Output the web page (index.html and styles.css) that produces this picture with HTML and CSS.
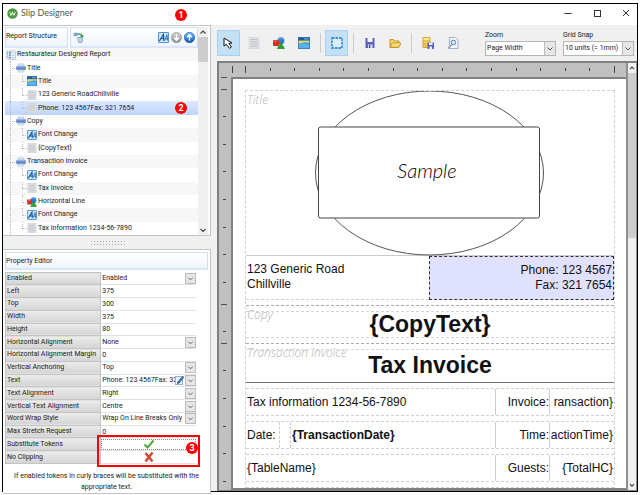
FILE: index.html
```
<!DOCTYPE html>
<html lang="en">
<head>
  <meta charset="UTF-8">
  <meta name="viewport" content="width=device-width, initial-scale=1.0">
  <title>Slip Designer</title>
  <link rel="stylesheet" href="styles.css">
</head>
<body>

  <!-- Shared icons -->
  <svg class="sprite" aria-hidden="true">
    <defs>
      <linearGradient id="blueGrad" x1="0" y1="0" x2="0" y2="1"><stop offset="0" stop-color="#7fc4f5"/><stop offset="1" stop-color="#0b55b5"/></linearGradient>
      <linearGradient id="greyGrad" x1="0" y1="0" x2="0" y2="1"><stop offset="0" stop-color="#d8d8d8"/><stop offset="1" stop-color="#8c8c8c"/></linearGradient>
      <linearGradient id="goldGrad" x1="0" y1="0" x2="0" y2="1"><stop offset="0" stop-color="#fdf0a8"/><stop offset="1" stop-color="#ecc040"/></linearGradient>
    </defs>
    <symbol id="icon-report" viewBox="0 0 16 16">
      <path d="M2 2.500 12 .8 15 2v13H4z" fill="#eef3fa" stroke="#9db4cf"/>
      <path d="M1 2v12M2.500 2v12" stroke="#8aa4c4" stroke-dasharray="1.500 1"/>
      <rect x="5" y="3" width="3" height="3" fill="#63a565"/><rect x="5" y="7" width="3" height="3" fill="#7092c8"/><rect x="5" y="11" width="3" height="2.500" fill="#7092c8"/>
      <path d="M9.500 4.500h4M9.500 8.500h4M9.500 12h4" stroke="#a9b8cc"/>
    </symbol>
    <symbol id="icon-band" viewBox="0 0 16 16">
      <rect x="3.500" y="1.500" width="9" height="4" fill="#dfeaf8" stroke="#a9bfe2"/>
      <path d="M3.500 10.500h9v4h-9z" fill="#e6effa" stroke="#a9bfe2"/>
      <rect x="0" y="4.500" width="16" height="7" rx="2.500" fill="#7a9cd6"/>
      <path d="M1.500 8h13" stroke="#4f70ac" stroke-width="1.500"/>
      <path d="M2 6h12" stroke="#b4cbef"/>
    </symbol>
    <symbol id="icon-text" viewBox="0 0 16 16">
      <rect x="1.500" y=".5" width="13" height="15" fill="#e3e5e8" stroke="#ccd0d5"/>
      <path d="M3 3.500h10M3 6.500h10M3 9.500h10M3 12.500h10" stroke="#b4b8be" stroke-width="1.200"/>
    </symbol>
    <symbol id="icon-image" viewBox="0 0 16 16">
      <rect x=".5" y=".5" width="15" height="15" fill="#3f93e2" stroke="#245f9f"/>
      <rect x="1" y="1" width="14" height="3.500" fill="#1d5c94"/>
      <path d="M1 5h14v2.500L9 7 1 9z" fill="#f3dd55"/>
      <path d="M8 2.500h6" stroke="#7db4e4" stroke-width="1.500"/>
      <path d="M1 10q6-3 14 0v5H1z" fill="#58b3f3"/>
    </symbol>
    <symbol id="icon-font" viewBox="0 0 16 16">
      <rect x=".75" y=".75" width="14.500" height="14.500" rx="1" fill="#cfe6fa" stroke="#4c96d8" stroke-width="1.500"/>
      <path d="M2 13 8 3.500 8.500 13M4.500 9.500H8.500" fill="none" stroke="#174f96" stroke-width="1.700"/>
      <path d="M9.500 12.500 13 4l1 8.500M10.500 10H14" fill="none" stroke="#2671bd" stroke-width="1.400"/>
    </symbol>
    <symbol id="icon-shapes" viewBox="0 0 16 16">
      <circle cx="10.500" cy="5" r="4.700" fill="#2d7bd0"/>
      <path d="M7 3q3-3 6 0" fill="none" stroke="#8bc0f2"/>
      <rect x="0" y="4" width="8" height="8" rx="1" fill="#d62f1f"/>
      <path d="M1.500 5.500h4" stroke="#f58d78"/>
      <path d="M10.500 7 15.500 15.500h-10z" fill="#26a332" stroke="#14771f" stroke-width=".6"/>
    </symbol>
    <symbol id="icon-chevron" viewBox="0 0 10 10">
      <path d="M2.500 4 5 6.500 7.500 4" fill="none" stroke="#555"/>
    </symbol>
  </svg>

  <div class="window">
    <header class="title-bar">
      <svg class="logo" viewBox="0 0 12 12"><circle cx="6" cy="6" r="5.700" fill="#4d9a45"/><path d="M3 4.200 4.300 8 6 4.800 7.700 8 9 4.200" fill="none" stroke="#d9efd4" stroke-width="1.100"/></svg>
      <h1>Slip Designer</h1>
      <div class="window-buttons">
        <button aria-label="Minimize"><svg viewBox="0 0 8 8"><path d="M.5 4.500h7" stroke="#333"/></svg></button>
        <button aria-label="Maximize"><svg viewBox="0 0 8 8"><rect x="1.500" y="1.500" width="6" height="6" fill="none" stroke="#333"/></svg></button>
        <button aria-label="Close"><svg viewBox="0 0 8 8"><path d="M1 1l6 6M7 1 1 7" stroke="#333"/></svg></button>
      </div>
      <span class="marker marker-one">1</span>
    </header>

    <div class="workspace">
      <aside class="sidebar">
        <section class="structure">
          <div class="structure-main">
            <div class="structure-head">
              <h2 class="panel-title">Report Structure</h2>
              <div class="structure-tools">
                <button aria-label="Refresh structure"><svg viewBox="0 0 16 16"><rect x="1" y="1" width="6" height="5" fill="#7aa2d8"/><path d="M7 3q6-1 6 4l-2-1M13 7l2-2" fill="none" stroke="#2f9a3a" stroke-width="2"/><path d="M7 8h7l-1 7H8z" fill="#bcd7ef" stroke="#608fbc"/></svg></button>
                <span class="spacer"></span>
                <button aria-label="Font change"><svg><use href="#icon-font"/></svg></button>
                <button aria-label="Move down"><svg viewBox="0 0 16 16"><circle cx="8" cy="8" r="7.500" fill="url(#greyGrad)" stroke="#999"/><path d="M8 3.500v8M4.500 8.500 8 12l3.500-3.500" fill="none" stroke="#fff" stroke-width="2"/></svg></button>
                <button aria-label="Move up"><svg viewBox="0 0 16 16"><circle cx="8" cy="8" r="7.500" fill="url(#blueGrad)" stroke="#1b5fae"/><path d="M8 12.500v-8M4.500 7.500 8 4l3.500 3.500" fill="none" stroke="#fff" stroke-width="2"/></svg></button>
              </div>
            </div>
            <ul class="tree">
              <li class="root"><svg><use href="#icon-report"/></svg>Restaurateur Designed Report</li>
              <li class="band"><svg><use href="#icon-band"/></svg>Title</li>
              <li class="item"><svg><use href="#icon-image"/></svg>Title</li>
              <li class="item"><svg><use href="#icon-text"/></svg>123 Generic RoadChillville</li>
              <li class="item selected"><svg><use href="#icon-text"/></svg>Phone: 123 4567Fax: 321 7654<span class="marker marker-two">2</span></li>
              <li class="band"><svg><use href="#icon-band"/></svg>Copy</li>
              <li class="item"><svg><use href="#icon-font"/></svg>Font Change</li>
              <li class="item"><svg><use href="#icon-text"/></svg>{CopyText}</li>
              <li class="band"><svg><use href="#icon-band"/></svg>Transaction invoice</li>
              <li class="item"><svg><use href="#icon-font"/></svg>Font Change</li>
              <li class="item"><svg><use href="#icon-text"/></svg>Tax Invoice</li>
              <li class="item"><svg><use href="#icon-shapes"/></svg>Horizontal Line</li>
              <li class="item"><svg><use href="#icon-font"/></svg>Font Change</li>
              <li class="item"><svg><use href="#icon-text"/></svg>Tax information 1234-56-7890</li>
            </ul>
          </div>
          <div class="scrollbar">
            <svg viewBox="0 0 10 10"><path d="M2.500 6.500 5 4l2.500 2.500" fill="none" stroke="#444" stroke-width="1.200"/></svg>
            <span class="thumb"></span>
            <svg viewBox="0 0 10 10"><path d="M2.500 4 5 6.500 7.500 4" fill="none" stroke="#444" stroke-width="1.200"/></svg>
          </div>
        </section>

        <div class="splitter"><span></span></div>

        <section class="properties">
          <h2 class="panel-title">Property Editor</h2>
          <div class="property-grid">
            <table>
              <tbody>
                <tr><th><label for="enabled">Enabled</label></th><td><div class="cell"><select id="enabled"><option>Enabled</option></select><svg class="drop"><use href="#icon-chevron"/></svg></div></td></tr>
                <tr><th><label for="left">Left</label></th><td><input id="left" value="375"></td></tr>
                <tr><th><label for="top">Top</label></th><td><input id="top" value="300"></td></tr>
                <tr><th><label for="width">Width</label></th><td><input id="width" value="375"></td></tr>
                <tr><th><label for="height">Height</label></th><td><input id="height" value="80"></td></tr>
                <tr><th><label for="halign">Horizontal Alignment</label></th><td><div class="cell"><select id="halign"><option>None</option></select><svg class="drop"><use href="#icon-chevron"/></svg></div></td></tr>
                <tr><th><label for="hmargin">Horizontal Alignment Margin</label></th><td><input id="hmargin" value="0"></td></tr>
                <tr><th><label for="anchor">Vertical Anchoring</label></th><td><div class="cell"><select id="anchor"><option>Top</option></select><svg class="drop"><use href="#icon-chevron"/></svg></div></td></tr>
                <tr><th><label for="text">Text</label></th><td><div class="cell"><input id="text" value="Phone: 123 4567Fax: 321 7654"><button class="edit" aria-label="Edit text"><svg viewBox="0 0 10 10"><rect x=".5" y="1.500" width="7" height="8" fill="#eaf1fa" stroke="#9ab0cc"/><path d="M3 8 8.500 1.500" stroke="#2f6db5" stroke-width="2.200"/><path d="m2 9 .5-2L4 8z" fill="#333"/></svg></button><svg class="drop"><use href="#icon-chevron"/></svg></div></td></tr>
                <tr><th><label for="talign">Text Alignment</label></th><td><div class="cell"><select id="talign"><option>Right</option></select><svg class="drop"><use href="#icon-chevron"/></svg></div></td></tr>
                <tr><th><label for="valign">Vertical Text Alignment</label></th><td><div class="cell"><select id="valign"><option>Centre</option></select><svg class="drop"><use href="#icon-chevron"/></svg></div></td></tr>
                <tr><th><label for="wrap">Word Wrap Style</label></th><td><div class="cell"><select id="wrap"><option>Wrap On Line Breaks Only</option></select><svg class="drop"><use href="#icon-chevron"/></svg></div></td></tr>
                <tr><th><label for="stretch">Max Stretch Request</label></th><td><input id="stretch" value="0"></td></tr>
                <tr><th><label for="tokens">Substitute Tokens</label></th><td><button id="tokens" class="toggle focused" aria-pressed="true"><svg viewBox="0 0 12 10"><path d="M1.500 5.500 4.500 8.500 10.500 1.500" fill="none" stroke="#4fa83f" stroke-width="2"/></svg></button></td></tr>
                <tr><th><label for="clipping">No Clipping</label></th><td><button id="clipping" class="toggle" aria-pressed="false"><svg viewBox="0 0 12 10"><path d="M2.500 1 9.500 9.500M9.500 .5 2.500 9.500" fill="none" stroke="#d8492f" stroke-width="2.500"/></svg></button></td></tr>
              </tbody>
            </table>
            <div class="highlight"><span class="marker marker-three">3</span></div>
          </div>
          <p class="help">If enabled tokens in curly braces will be substituted with the appropriate text.</p>
        </section>
      </aside>

      <main class="editor">
        <div class="toolbar">
          <button class="tool active" aria-label="Select"><svg viewBox="0 0 12 12"><path d="M1 1v8l2.300-1.700L6.500 11.300 8.500 10 5.800 6.300 9 6z" fill="#fff" stroke="#111"/></svg></button>
          <button class="tool" aria-label="Text"><svg><use href="#icon-text"/></svg></button>
          <button class="tool" aria-label="Shape"><svg><use href="#icon-shapes"/></svg></button>
          <button class="tool" aria-label="Image"><svg><use href="#icon-image"/></svg></button>
          <span class="divider"></span>
          <button class="tool active" aria-label="Show bounds"><svg viewBox="0 0 12 12"><rect x="1" y="1" width="10" height="10" fill="#d9edfb" stroke="#1173c7" stroke-width="1.300" stroke-dasharray="2.500 1"/></svg></button>
          <span class="divider"></span>
          <button class="tool" aria-label="Save"><svg viewBox="0 0 12 12"><path d="M1.500 1h9v10h-9z" fill="#5b63bd"/><path d="M3.500 1h5v4h-5z" fill="#f2f3fb"/><path d="M4 7.500h4.500V11H4z" fill="#d5d8ee"/><path d="M5 8h1.200v3H5z" fill="#343b8e"/></svg></button>
          <button class="tool" aria-label="Open"><svg viewBox="0 0 12 12"><path d="M1 10.500V2.500h3.500l1 1.500H10v2" fill="#f4d56c" stroke="#c7972a"/><path d="M1 10.500 3.200 6H12l-2.200 4.500z" fill="url(#goldGrad)" stroke="#c7972a"/></svg></button>
          <span class="divider"></span>
          <button class="tool" aria-label="Save to database"><svg viewBox="0 0 12 12"><path d="M1 .5h7v10H1z" fill="url(#goldGrad)" stroke="#d3a62e"/><path d="M1 4h7M1 7h7" stroke="#d3a62e"/><path d="M5.500 5.500H12V12H5.500z" fill="#5b63bd"/><path d="M7 5.500h3.500V8H7zM7.500 9.500H10V12H7.500z" fill="#eceefa"/></svg></button>
          <button class="tool" aria-label="Preview"><svg viewBox="0 0 12 12"><path d="M2.500.5h6L11 3v8.500H2.500z" fill="#f3f7fc" stroke="#9ab2d0"/><circle cx="6.500" cy="5.500" r="2.300" fill="#d4e7f8" stroke="#5d88bd"/><path d="M5 7.300 1 11.500" stroke="#8b9fbb" stroke-width="1.500"/></svg></button>
          <div class="fields">
            <div class="field">
              <label for="zoom">Zoom</label>
              <div class="cell"><select id="zoom"><option>Page Width</option></select><svg class="drop"><use href="#icon-chevron"/></svg></div>
            </div>
            <div class="field">
              <label for="snap">Grid Snap</label>
              <div class="cell"><select id="snap"><option>10 units (= 1mm)</option></select><svg class="drop"><use href="#icon-chevron"/></svg></div>
            </div>
          </div>
        </div>

        <div class="canvas">
          <div class="ruler-top">
            <i class="major"></i>
            <div class="ticks">
              <i class="major"></i><i></i><i></i><i></i><i></i><i></i><i></i><i></i><i></i><i></i><i></i><i></i><i></i><i></i><i></i><i class="major"></i>
            </div>
          </div>
          <svg class="ruler-left" viewBox="0 0 10 411" preserveAspectRatio="xMidYMin slice">
            <path d="M2 .5h6M2 12.500h6M2 227.500h6M2 266.500h6" stroke="#555"/>
            <path d="M4 39.500h3M4 67.500h3M4 94.500h3M4 122.500h3M4 150.500h3M4 177.500h3M4 205.500h3M4 254.500h3M4 293.500h3M4 321.500h3M4 349.500h3M4 376.500h3M4 404.500h3" stroke="#444"/>
          </svg>
          <div class="page">
            <section class="sheet">
              <div class="title-area">
                <em>Title</em>
                <svg class="sample" viewBox="0 0 230 165">
                  <ellipse cx="114.500" cy="82" rx="114" ry="82" fill="#fff" stroke="#555"/>
                  <rect x="3.500" y="36" width="221" height="91" rx="2" fill="#fff" stroke="#444"/>
                  <text x="112" y="87" text-anchor="middle">Sample</text>
                </svg>
              </div>
              <div class="address">
                <p>123 Generic Road<br>Chillville</p>
                <p class="phone">Phone: 123 4567<br>Fax: 321 7654</p>
              </div>
              <div class="heading-band">
                <em>Copy</em>
                <strong>{CopyText}</strong>
              </div>
              <div class="heading-band invoice-band">
                <em>Transaction invoice</em>
                <strong>Tax Invoice</strong>
              </div>
              <div class="line">
                <span class="wide">Tax information 1234-56-7890</span><span class="key">Invoice:</span><span class="value">ransaction}</span>
              </div>
              <div class="line">
                <span class="date">Date:</span><b class="wide">{TransactionDate}</b><span class="key">Time:</span><span class="value">actionTime}</span>
              </div>
              <div class="line">
                <span class="wide">{TableName}</span><span class="key">Guests:</span><span class="value">{TotalHC}</span>
              </div>
              <div class="line">
                <span class="server"></span><span class="gap"></span><span class="key"></span><span class="value"></span>
              </div>
            </section>
          </div>
          <div class="scrollbar canvas-scroll">
            <svg viewBox="0 0 10 10"><path d="M2.500 6.500 5 4l2.500 2.500" fill="none" stroke="#444" stroke-width="1.500"/></svg>
            <span class="thumb"></span>
            <svg viewBox="0 0 10 10"><path d="M2.500 4 5 6.500 7.500 4" fill="none" stroke="#444" stroke-width="1.500"/></svg>
          </div>
        </div>
      </main>
    </div>
  </div>

</body>
</html>
```

FILE: styles.css
```
* {
  box-sizing: border-box;
}

body {
  margin: 0;
  padding: 3px 2px;
  height: 100vh;
  background-color: #fff;
  color: #222;
  font-family: Roboto, "Liberation Sans", sans-serif;
  font-size: 7px;
  line-height: 9px;
}

h1, h2, p, ul {
  margin: 0;
  padding: 0;
  font-weight: normal;
}

button, input, select {
  margin: 0;
  padding: 0;
  border: none;
  border-radius: 0;
  background: none;
  color: inherit;
  font: inherit;
  appearance: none;
}

svg {
  display: block;
}

.sprite {
  position: absolute;
  width: 0;
  height: 0;
}

.window {
  display: flex;
  flex-direction: column;
  height: 100%;
  border: 1px solid #000;
}

/* Title bar */
.title-bar {
  position: relative;
  display: flex;
  align-items: center;
  flex: 0 0 21px;
  padding: 0 7px 3px 4px;
}

.logo {
  width: 11px;
  height: 11px;
}

.title-bar h1 {
  margin-left: 3px;
  font-family: Lato, sans-serif;
  font-size: 9px;
  line-height: 12px;
  color: #555;
}

.window-buttons {
  display: flex;
  gap: 21px;
  margin-left: auto;
}

.window-buttons svg {
  width: 8px;
  height: 8px;
}

.workspace {
  display: flex;
  flex: 1;
  min-height: 0;
  background-color: #f0f0f0;
}

/* Numbered callouts */
.marker {
  position: absolute;
  width: 12px;
  height: 12px;
  border-radius: 50%;
  background-color: #f00;
  color: #fff;
  font-size: 9px;
  font-weight: bold;
  line-height: 12px;
  text-align: center;
}

.marker-one {
  left: 172px;
  top: 5px;
}

.marker-two {
  right: 11px;
  top: 1px;
}

.marker-three {
  right: 0;
  top: 5px;
}

/* Sidebar */
.sidebar {
  display: flex;
  flex-direction: column;
  flex: 0 0 208px;
}

.structure, .properties {
  border: 1px solid #c4c4c4;
  border-left: none;
  background-color: #fff;
}

.structure {
  display: flex;
  flex: 0 0 211px;
  padding: 1px 2px 0 2px;
}

.structure-main {
  display: flex;
  flex-direction: column;
  flex: 1;
}

.structure-head {
  display: flex;
  gap: 2px;
  height: 21px;
}

.panel-title, .structure-tools {
  border: 1px solid #cfdcf5;
  border-bottom: 2px solid #dbe6fb;
  background: linear-gradient(#fff, #f0f4fd);
}

.panel-title {
  font-size: 7px;
  line-height: 17px;
}

.structure-head .panel-title {
  width: 63px;
}

.structure-tools {
  display: flex;
  align-items: center;
  flex: 1;
  gap: 2px;
  padding: 0 2px;
}

.structure-tools svg {
  width: 11px;
  height: 11px;
}

.spacer {
  flex: 1;
}

.tree {
  display: flex;
  flex-direction: column;
  flex: 1;
  list-style: none;
}

.tree li {
  position: relative;
  display: flex;
  align-items: center;
  flex: 1;
  gap: 1px;
}

.tree li:nth-child(odd) {
  background-color: #f7f7f7;
}

.tree li.selected {
  background: linear-gradient(#dce8fd, #bfd3fa);
}

.tree svg {
  width: 10px;
  height: 10px;
}

.root {
  padding-left: 1px;
}

.band {
  padding-left: 11px;
}

.item {
  padding-left: 22px;
}

/* Dotted branch lines */
.band::before, .item::before {
  content: "";
  position: absolute;
  left: 5px;
  top: 0;
  bottom: 0;
  width: 6px;
  border-left: 1px dotted #bbb;
}

.item::after, .band::after {
  content: "";
  position: absolute;
  left: 17px;
  top: 0;
  height: 50%;
  width: 5px;
  border-left: 1px dotted #bbb;
  border-bottom: 1px dotted #bbb;
}

.band::after {
  left: 5px;
  border-left: none;
}

.scrollbar {
  display: flex;
  flex-direction: column;
  flex: 0 0 10px;
  background-color: #f0f0f0;
}

.scrollbar svg {
  width: 10px;
  height: 10px;
}

.scrollbar .thumb {
  height: 25px;
  margin-bottom: auto;
  background-color: #cdcdcd;
}

.splitter {
  display: flex;
  align-items: center;
  justify-content: center;
  flex: 0 0 13px;
}

.splitter span {
  width: 35px;
  height: 5px;
  background: radial-gradient(#aaa 1px, transparent 1px) 0 0 / 3px 3px;
}

/* Property editor */
.properties {
  flex: 1;
  padding: 2px 2px 0;
}

.properties .panel-title {
  height: 18px;
}

.property-grid {
  position: relative;
  margin: 2px 12px 0 0;
}

table {
  width: 100%;
  height: 192px;
  border-collapse: collapse;
  table-layout: fixed;
}

th, td {
  padding: 0;
  border-bottom: 1px solid #e2e2e2;
  text-align: left;
  font-weight: normal;
}

th {
  padding-left: 1px;
  border: 1px solid #c4c4c4;
  background: linear-gradient(#ececec, #d4d4d4);
  white-space: nowrap;
}

td input, .cell select {
  display: block;
  width: 100%;
  min-width: 0;
  height: 11px;
  padding-left: 1px;
}

.cell {
  display: flex;
  background-color: #fff;
}

.drop {
  flex: 0 0 11px;
  height: 11px;
  border: 1px solid #bbb;
  background-color: #e6e6e6;
}

.edit svg {
  width: 10px;
  height: 10px;
}

.toggle {
  display: flex;
  align-items: center;
  justify-content: center;
  width: 100%;
  height: 11px;
}

.toggle svg {
  width: 12px;
  height: 10px;
}

.focused {
  border: 1px dotted #888;
}

.highlight {
  position: absolute;
  right: -4px;
  bottom: -3px;
  width: 103px;
  height: 32px;
  border: 2px solid #f00;
}

.help {
  padding: 7px 6px 0;
  line-height: 11px;
  text-align: center;
}

/* Toolbar */
.editor {
  display: flex;
  flex-direction: column;
  flex: 1;
  min-width: 0;
  padding-left: 6px;
}

.toolbar {
  display: flex;
  align-items: center;
  flex: 0 0 36px;
  padding: 0 3px 0 0;
}

.tool {
  display: flex;
  align-items: center;
  justify-content: center;
  width: 23px;
  height: 26px;
  margin-right: 2px;
  border: 1px solid transparent;
}

.tool.active {
  border-color: #a5d1f2;
  background-color: #c4e0f5;
}

.tool svg {
  width: 12px;
  height: 12px;
}

.tool use {
  width: 11px;
  height: 11px;
}

.divider {
  width: 1px;
  height: 20px;
  margin: 0 4px 0 3px;
  background-color: #ccc;
}

.fields {
  display: flex;
  gap: 7px;
  margin-left: auto;
}

.field {
  width: 71px;
}

.field label {
  display: block;
  margin-bottom: 1px;
}

.field .cell {
  border: 1px solid #b5b5b5;
}

.field select {
  height: 13px;
}

.field .drop {
  height: 13px;
  border-width: 0 0 0 1px;
}

/* Canvas */
.canvas {
  display: grid;
  grid-template-columns: 12px minmax(0, 1fr) 11px;
  grid-template-rows: 14px minmax(0, 1fr);
  flex: 1;
  min-height: 0;
  border: 2px solid #808080;
  border-width: 2px 0 1px 2px;
  background-color: #c0c0c0;
}

.ruler-top {
  grid-column: 1 / 3;
  display: flex;
  align-items: center;
  padding: 0 11px 1px 13px;
}

.ruler-top i {
  width: 1px;
  height: 3px;
  background-color: #444;
}

.ruler-top .major {
  height: 7px;
}

.ticks {
  display: flex;
  align-items: center;
  justify-content: space-between;
  flex: 1;
  margin-left: 12px;
}

.ruler-left {
  grid-column: 1;
  grid-row: 2;
  width: 10px;
  height: 411px;
}

.page {
  grid-column: 2;
  grid-row: 2;
  overflow: hidden;
  padding: 11px 11px 0 12px;
  border: 2px solid #808080;
  border-right: none;
  background-color: #fff;
}

.canvas-scroll {
  grid-column: 3;
  grid-row: 1 / 3;
  border-left: 2px solid #909090;
  border-right: 1px solid #909090;
}

.canvas-scroll svg {
  width: 8px;
}

.canvas-scroll .thumb {
  height: 165px;
}

/* Slip contents */
.sheet {
  border: 1px dashed #d0d0d0;
  border-bottom: none;
  font-family: "Liberation Sans", Arial, sans-serif;
  font-size: 12px;
  line-height: 15px;
  color: #111;
}

.sheet em {
  position: absolute;
  left: 1px;
  top: 1px;
  font-family: "Open Sans", sans-serif;
  font-size: 12px;
  font-weight: 300;
  color: #b4b4b4;
}

.title-area {
  position: relative;
  height: 165px;
  border-bottom: 1px solid #ccc;
}

.sample {
  width: 230px;
  height: 165px;
  margin: 0 auto;
}

.sample text {
  font-family: Lato, sans-serif;
  font-size: 20px;
  font-style: italic;
  font-weight: 300;
}

.address {
  display: flex;
  height: 44px;
}

.address p {
  flex: 1;
  padding: 6px 1px;
  border-bottom: 1px dashed #d0d0d0;
}

.address .phone {
  border: 1px dashed #333;
  background-color: #e0e0ff;
  text-align: right;
}

.heading-band {
  position: relative;
  height: 39px;
  padding: 4px 0;
  border-bottom: 1px dashed #aaa;
  text-align: center;
}

.heading-band::before {
  content: "";
  position: absolute;
  inset: 5px 0;
  border: 1px dashed #d8d8d8;
  border-width: 1px 0;
}

.address + .heading-band {
  margin-top: 5px;
  border-top: 1px dashed #aaa;
}

.heading-band strong {
  font-size: 23px;
  line-height: 28px;
}

.invoice-band {
  padding: 7px 0 3px;
  border-bottom: 1px solid #777;
}

.invoice-band::before {
  border-bottom: none;
}

.line {
  display: flex;
  height: 28px;
  margin-top: 5px;
  border: 1px dashed #d0d0d0;
  border-width: 1px 0;
  line-height: 26px;
}

.line span, .line b {
  padding: 0 1px;
  white-space: nowrap;
}

.line .wide, .line .gap {
  flex: 1;
}

.line .key, .line .value {
  border-left: 1px solid #ccc;
  text-align: right;
}

.line .key {
  width: 54px;
  padding: 0;
}

.line .value {
  width: 65px;
  padding-left: 0;
}

.line .date {
  width: 34px;
  margin-right: 10px;
  border-right: 1px dashed #ccc;
}

.line b {
  border-left: 1px dashed #ccc;
}

.line .server {
  width: 48px;
  border-right: 1px dashed #ccc;
}
```
